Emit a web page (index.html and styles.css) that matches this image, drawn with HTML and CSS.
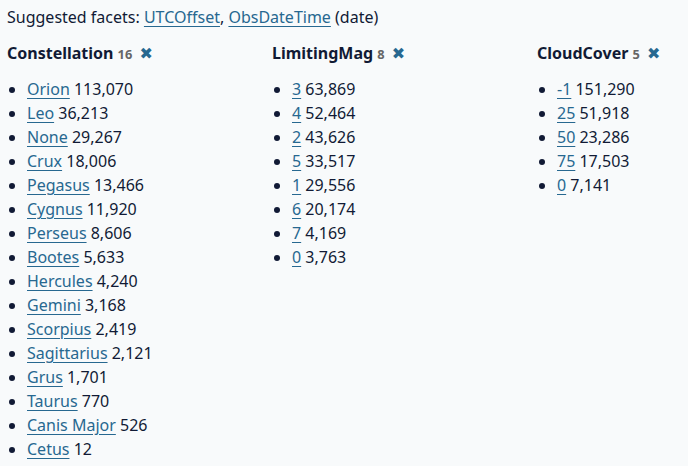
FILE: index.html
```html
<!DOCTYPE html>
<html>
<head>
<meta charset="utf-8">
<link rel="stylesheet" href="styles.css">
</head>
<body>
<p class="suggested-facets">Suggested facets: <a href="#">UTCOffset</a>, <a href="#">ObsDateTime</a> (date)</p>
<div class="facet-results">
  <div class="facet-info">
    <h3>Constellation <span class="facet-info-total">16</span> <a class="cross" href="#">✖</a></h3>
    <ul>
      <li><a href="#">Orion</a> 113,070</li>
      <li><a href="#">Leo</a> 36,213</li>
      <li><a href="#">None</a> 29,267</li>
      <li><a href="#">Crux</a> 18,006</li>
      <li><a href="#">Pegasus</a> 13,466</li>
      <li><a href="#">Cygnus</a> 11,920</li>
      <li><a href="#">Perseus</a> 8,606</li>
      <li><a href="#">Bootes</a> 5,633</li>
      <li><a href="#">Hercules</a> 4,240</li>
      <li><a href="#">Gemini</a> 3,168</li>
      <li><a href="#">Scorpius</a> 2,419</li>
      <li><a href="#">Sagittarius</a> 2,121</li>
      <li><a href="#">Grus</a> 1,701</li>
      <li><a href="#">Taurus</a> 770</li>
      <li><a href="#">Canis Major</a> 526</li>
      <li><a href="#">Cetus</a> 12</li>
    </ul>
  </div>
  <div class="facet-info">
    <h3>LimitingMag <span class="facet-info-total">8</span> <a class="cross" href="#">✖</a></h3>
    <ul>
      <li><a href="#">3</a> 63,869</li>
      <li><a href="#">4</a> 52,464</li>
      <li><a href="#">2</a> 43,626</li>
      <li><a href="#">5</a> 33,517</li>
      <li><a href="#">1</a> 29,556</li>
      <li><a href="#">6</a> 20,174</li>
      <li><a href="#">7</a> 4,169</li>
      <li><a href="#">0</a> 3,763</li>
    </ul>
  </div>
  <div class="facet-info">
    <h3>CloudCover <span class="facet-info-total">5</span> <a class="cross" href="#">✖</a></h3>
    <ul>
      <li><a href="#">-1</a> 151,290</li>
      <li><a href="#">25</a> 51,918</li>
      <li><a href="#">50</a> 23,286</li>
      <li><a href="#">75</a> 17,503</li>
      <li><a href="#">0</a> 7,141</li>
    </ul>
  </div>
</div>
</body>
</html>
```
FILE: styles.css
```css
html, body {
  background: #f8fafb;
}
html {
  overflow: hidden;
}
body {
  margin: 0;
  padding: 5px 7px;
  font-family: "Noto Sans", "Open Sans", sans-serif;
  font-size: 16px;
  line-height: 24px;
  color: #111a35;
}
a {
  color: #276890;
  text-decoration: underline;
  text-underline-offset: 3px;
}
.suggested-facets {
  margin: 0 0 12px;
}
.facet-results {
  display: flex;
  overflow: hidden;
}
.facet-info {
  flex: 0 0 250px;
  width: 250px;
  margin-right: 15px;
}
.facet-info h3 {
  margin: 0 0 11px;
  font-size: 16px;
  line-height: 24px;
  font-weight: 700;
}
.facet-info-total {
  font-size: 12.8px;
  color: #666;
}
.cross {
  text-decoration: none;
  font-family: "DejaVu Sans", sans-serif;
  font-size: 16px;
  margin-left: 3px;
}
.facet-info ul {
  margin: 0;
  padding: 0 0 0 20px;
}
.facet-info li {
  margin: 0;
  padding: 0;
}
```
